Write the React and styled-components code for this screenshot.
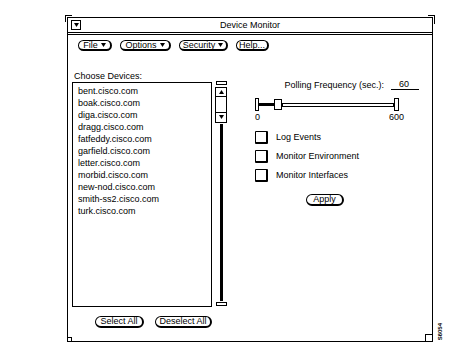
import React from "react";
import styled, { createGlobalStyle } from "styled-components";

const Global = createGlobalStyle`
  html, body { margin: 0; padding: 0; background: #fff; }
  body {
    font-family: "Liberation Sans", Arial, Helvetica, sans-serif;
    font-size: 9px;
    color: #000;
  }
`;

const Page = styled.div`
  display: flex;
  align-items: flex-start;
  box-sizing: border-box;
  width: 463px;
  height: 352px;
  padding: 17px 0 0 67px;
`;

const Window = styled.div`
  position: relative;
  box-sizing: border-box;
  width: 366px;
  height: 325px;
  border: 1px solid #000;
  display: flex;
  flex-direction: column;
`;

const Corner = styled.span`
  position: absolute;
  box-sizing: border-box;
  width: 7px;
  height: 7px;
  border: 0 solid #000;
  ${(p) => p.$pos === "tl" && "top: -3px; left: -3px; border-top-width: 1px; border-left-width: 1px;"}
  ${(p) => p.$pos === "tr" && "top: -3px; right: -3px; border-top-width: 1px; border-right-width: 1px; height: 9px;"}
  ${(p) => p.$pos === "bl" && "bottom: 0; left: 0; border-top-width: 1px; border-right-width: 1px; width: 4px; height: 4px;"}
  ${(p) => p.$pos === "br" && "bottom: 0; right: 0; border-top-width: 1px; border-left-width: 1px;"}
`;

const TitleBar = styled.div`
  box-sizing: border-box;
  height: 17px;
  border-bottom: 3px double #000;
  display: flex;
  align-items: center;
  padding: 0 3px;
`;

const MenuMark = styled.span`
  box-sizing: border-box;
  width: 10px;
  height: 10px;
  border: 1px solid #000;
  display: flex;
  align-items: center;
  justify-content: center;
`;

const Title = styled.span`
  flex: 1;
  text-align: center;
  padding-right: 10px;
  line-height: 10px;
`;

const ControlBar = styled.div`
  display: flex;
  gap: 8px;
  margin-top: 5px;
  padding-left: 10px;
`;

const Pill = styled.button`
  box-sizing: border-box;
  width: ${(p) => p.$w}px;
  height: ${(p) => p.$h || 11}px;
  margin: 0;
  padding: 0;
  background: #fff;
  color: #000;
  border: 1px solid #000;
  border-right-width: 2px;
  border-bottom-width: 2px;
  border-radius: 6px;
  font: 9px "Liberation Sans", Arial, sans-serif;
  line-height: 1;
  display: inline-flex;
  align-items: center;
  justify-content: center;
  gap: 3px;
`;

const Body = styled.div`
  display: flex;
  margin-top: 20px;
`;

const LeftPane = styled.div`
  width: 155px;
  padding-left: 4px;
  display: flex;
  flex-direction: column;
`;

const PaneLabel = styled.div`
  height: 10px;
  line-height: 10px;
  padding-left: 2px;
`;

const ListRow = styled.div`
  display: flex;
  align-items: flex-start;
  gap: 3px;
`;

const ListBox = styled.ul`
  box-sizing: border-box;
  width: 140px;
  height: 225px;
  margin: 1px 0 0;
  padding: 2px 0 0 5px;
  list-style: none;
  border: 1px solid #000;
`;

const ListItem = styled.li`
  height: 12px;
  line-height: 12px;
  white-space: nowrap;
`;

const Scroll = styled.div`
  width: 12px;
  height: 225px;
  display: flex;
  flex-direction: column;
  align-items: center;
`;

const Cap = styled.div`
  box-sizing: border-box;
  width: 11px;
  height: 4px;
  border: 1px solid #000;
`;

const Elevator = styled.div`
  box-sizing: border-box;
  margin-top: 2px;
  width: 12px;
  height: 36px;
  border: 1px solid #000;
  display: flex;
  flex-direction: column;
`;

const ElevCell = styled.div`
  height: ${(p) => p.$h}px;
  display: flex;
  align-items: center;
  justify-content: center;
  & + & { border-top: 1px solid #000; }
`;

const Cable = styled.div`
  flex: 1;
  width: 3px;
  background: #000;
  margin: 1px 0 1px;
`;

const BottomButtons = styled.div`
  display: flex;
  gap: 11px;
  margin-top: 9px;
  padding-left: 23px;
`;

const RightPane = styled.div`
  margin-left: 28px;
  width: 164px;
  display: flex;
  flex-direction: column;
`;

const PollRow = styled.div`
  margin-top: 9px;
  height: 10px;
  display: flex;
  justify-content: flex-end;
  align-items: flex-start;
`;

const PollLabel = styled.span`
  line-height: 10px;
  margin-right: 7px;
`;

const PollField = styled.span`
  box-sizing: border-box;
  width: 28px;
  height: 10px;
  line-height: 9px;
  border-bottom: 1px solid #000;
  padding-left: 8px;
`;

const Slider = styled.div`
  margin-top: 8px;
  height: 13px;
  display: flex;
  align-items: center;
`;

const EndCap = styled.div`
  box-sizing: border-box;
  width: ${(p) => p.$w}px;
  height: 13px;
  border: 1px solid #000;
`;

const Fill = styled.div`
  width: 15px;
  height: 3px;
  background: #000;
`;

const Thumb = styled.div`
  box-sizing: border-box;
  width: 8px;
  height: 11px;
  border: 1px solid #000;
`;

const Track = styled.div`
  box-sizing: border-box;
  width: 112px;
  height: 4px;
  border: 1px solid #000;
`;

const Scale = styled.div`
  margin-top: 1px;
  width: 149px;
  height: 10px;
  line-height: 10px;
  display: flex;
  justify-content: space-between;
`;

const Checks = styled.div`
  margin-top: 9px;
  display: flex;
  flex-direction: column;
  gap: 6px;
`;

const CheckRow = styled.label`
  display: flex;
  align-items: center;
  gap: 8px;
  height: 13px;
  line-height: 13px;
`;

const CheckBox = styled.span`
  box-sizing: border-box;
  width: 13px;
  height: 13px;
  border: 1px solid #000;
  border-right-width: 2px;
  border-bottom-width: 2px;
  border-radius: 1px;
`;

const ApplyRow = styled.div`
  margin-top: 12px;
  padding-left: 51px;
`;

const FigId = styled.span`
  align-self: flex-end;
  margin: 0 0 12px 4px;
  writing-mode: vertical-rl;
  transform: rotate(180deg);
  font-size: 6px;
  font-weight: bold;
  letter-spacing: 0;
`;

const Tri = ({ up }) => (
  <svg width="5" height="4" viewBox="0 0 5 4">
    <polygon points={up ? "0,4 5,4 2.5,0" : "0,0 5,0 2.5,4"} fill="#000" />
  </svg>
);

const devices = [
  "bent.cisco.com",
  "boak.cisco.com",
  "diga.cisco.com",
  "dragg.cisco.com",
  "fatfeddy.cisco.com",
  "garfield.cisco.com",
  "letter.cisco.com",
  "morbid.cisco.com",
  "new-nod.cisco.com",
  "smith-ss2.cisco.com",
  "turk.cisco.com",
];

export default function App() {
  return (
    <>
      <Global />
      <Page>
        <Window>
          <Corner $pos="tl" />
          <Corner $pos="tr" />
          <Corner $pos="bl" />
          <Corner $pos="br" />
          <TitleBar>
            <MenuMark>
              <Tri />
            </MenuMark>
            <Title>Device Monitor</Title>
          </TitleBar>
          <ControlBar>
            <Pill $w={34}>File <Tri /></Pill>
            <Pill $w={51}>Options <Tri /></Pill>
            <Pill $w={49}>Security <Tri /></Pill>
            <Pill $w={33}>Help...</Pill>
          </ControlBar>
          <Body>
            <LeftPane>
              <PaneLabel>Choose Devices:</PaneLabel>
              <ListRow>
                <ListBox>
                  {devices.map((d) => (
                    <ListItem key={d}>{d}</ListItem>
                  ))}
                </ListBox>
                <Scroll>
                  <Cap />
                  <Elevator>
                    <ElevCell $h={9}><Tri up /></ElevCell>
                    <ElevCell $h={15} />
                    <ElevCell $h={10}><Tri /></ElevCell>
                  </Elevator>
                  <Cable />
                  <Cap />
                </Scroll>
              </ListRow>
              <BottomButtons>
                <Pill $w={49} $h={12}>Select All</Pill>
                <Pill $w={57} $h={12}>Deselect All</Pill>
              </BottomButtons>
            </LeftPane>
            <RightPane>
              <PollRow>
                <PollLabel>Polling Frequency (sec.):</PollLabel>
                <PollField>60</PollField>
              </PollRow>
              <Slider>
                <EndCap $w={4} />
                <Fill />
                <Thumb />
                <Track />
                <EndCap $w={5} />
              </Slider>
              <Scale>
                <span>0</span>
                <span>600</span>
              </Scale>
              <Checks>
                <CheckRow><CheckBox />Log Events</CheckRow>
                <CheckRow><CheckBox />Monitor Environment</CheckRow>
                <CheckRow><CheckBox />Monitor Interfaces</CheckRow>
              </Checks>
              <ApplyRow>
                <Pill $w={38} $h={12}>Apply</Pill>
              </ApplyRow>
            </RightPane>
          </Body>
        </Window>
        <FigId>S6054</FigId>
      </Page>
    </>
  );
}
